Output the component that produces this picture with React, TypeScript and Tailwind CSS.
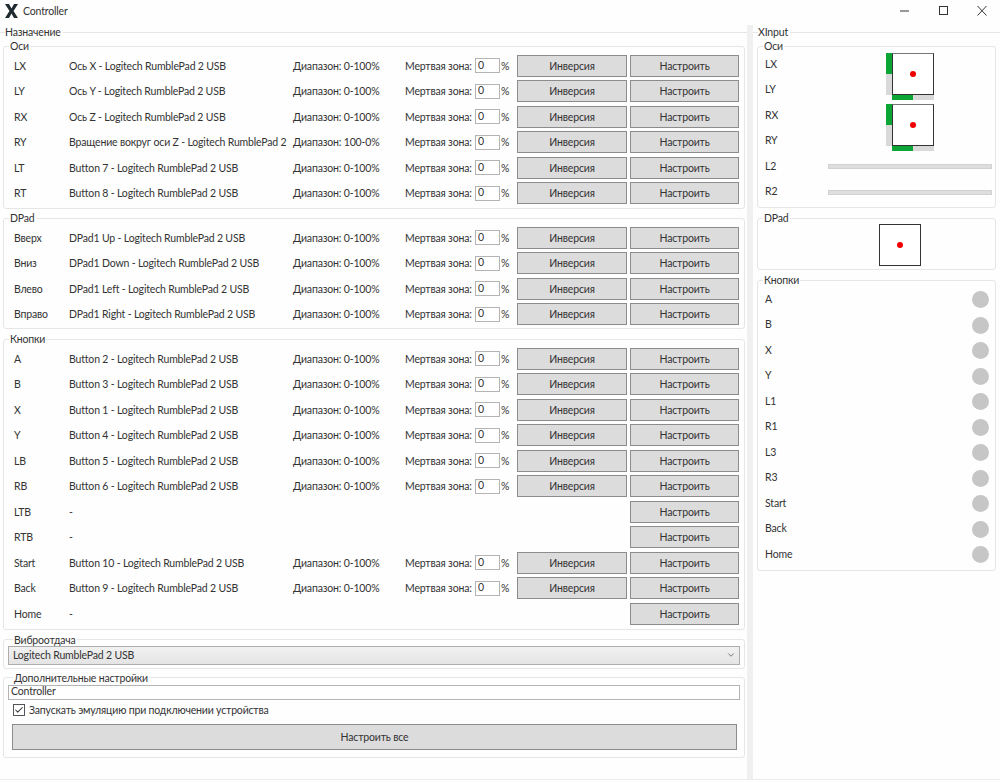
import type { ReactNode } from "react";
import { Check, ChevronDown } from "lucide-react";

type Row = { name: string; source: string; range?: string };

const axes: Row[] = [
  { name: "LX", source: "Ось X - Logitech RumblePad 2 USB", range: "0-100%" },
  { name: "LY", source: "Ось Y - Logitech RumblePad 2 USB", range: "0-100%" },
  { name: "RX", source: "Ось Z - Logitech RumblePad 2 USB", range: "0-100%" },
  { name: "RY", source: "Вращение вокруг оси Z - Logitech RumblePad 2", range: "100-0%" },
  { name: "LT", source: "Button 7 - Logitech RumblePad 2 USB", range: "0-100%" },
  { name: "RT", source: "Button 8 - Logitech RumblePad 2 USB", range: "0-100%" },
];

const dpad: Row[] = [
  { name: "Вверх", source: "DPad1 Up - Logitech RumblePad 2 USB", range: "0-100%" },
  { name: "Вниз", source: "DPad1 Down - Logitech RumblePad 2 USB", range: "0-100%" },
  { name: "Влево", source: "DPad1 Left - Logitech RumblePad 2 USB", range: "0-100%" },
  { name: "Вправо", source: "DPad1 Right - Logitech RumblePad 2 USB", range: "0-100%" },
];

const buttons: Row[] = [
  { name: "A", source: "Button 2 - Logitech RumblePad 2 USB", range: "0-100%" },
  { name: "B", source: "Button 3 - Logitech RumblePad 2 USB", range: "0-100%" },
  { name: "X", source: "Button 1 - Logitech RumblePad 2 USB", range: "0-100%" },
  { name: "Y", source: "Button 4 - Logitech RumblePad 2 USB", range: "0-100%" },
  { name: "LB", source: "Button 5 - Logitech RumblePad 2 USB", range: "0-100%" },
  { name: "RB", source: "Button 6 - Logitech RumblePad 2 USB", range: "0-100%" },
  { name: "LTB", source: "-" },
  { name: "RTB", source: "-" },
  { name: "Start", source: "Button 10 - Logitech RumblePad 2 USB", range: "0-100%" },
  { name: "Back", source: "Button 9 - Logitech RumblePad 2 USB", range: "0-100%" },
  { name: "Home", source: "-" },
];

const xinputButtons = ["A", "B", "X", "Y", "L1", "R1", "L3", "R3", "Start", "Back", "Home"];

function Group({ title, className, children }: { title: string; className?: string; children: ReactNode }) {
  return (
    <fieldset className={`border border-[#e6e6e6] rounded-[3px] ${className || ""}`}>
      <legend className="ml-[5px] px-[1px] h-[14px] leading-[14px]">{title}</legend>
      {children}
    </fieldset>
  );
}

function GreyButton({ label, className }: { label: string; className: string }) {
  return (
    <button className={`bg-[#dcdcdc] border border-[#8c8c8c] text-center pt-[2px] ${className}`}>{label}</button>
  );
}

function MappingRow({ row }: { row: Row }) {
  return (
    <div className="flex items-center h-[25.5px] pl-[10px]">
      <span className="w-[55px] shrink-0 pt-[2px]">{row.name}</span>
      <span className="w-[224px] shrink-0 pt-[2px] whitespace-nowrap">{row.source}</span>
      {row.range && (
        <>
          <span className="w-[112px] shrink-0 pt-[2px] whitespace-nowrap">Диапазон: {row.range}</span>
          <span className="w-[70px] shrink-0 pt-[2px] whitespace-nowrap">Мертвая зона:</span>
          <input
            readOnly
            value="0"
            className="w-[25px] h-[15px] shrink-0 border border-[#b4b4b4] bg-white pl-[2px] outline-none"
          />
          <span className="ml-[1px] w-[9px] shrink-0 pt-[2px]">%</span>
          <GreyButton label="Инверсия" className="ml-[7px] w-[110px] h-[22px] shrink-0" />
        </>
      )}
      <GreyButton label="Настроить" className="ml-auto mr-[5px] w-[109px] h-[22px] shrink-0" />
    </div>
  );
}

function Dot() {
  return <span className="w-[6px] h-[6px] rounded-full bg-[#f00000]" />;
}

// stick preview: vertical bar on the left, square with the dot, horizontal bar below
function StickPlot() {
  return (
    <div className="grid grid-cols-[6px_42px] grid-rows-[42px_5px] w-[48px]">
      <div className="bg-[#d9d9d9] flex flex-col">
        <div className="h-[21px] bg-[#0ca637]" />
      </div>
      <div className="border-[1.5px] border-[#333] border-t-[#777] flex items-center justify-center bg-white">
        <Dot />
      </div>
      <div />
      <div className="bg-[#d9d9d9]">
        <div className="w-[21px] h-full bg-[#0ca637]" />
      </div>
    </div>
  );
}

function WindowButtons() {
  return (
    <div className="flex items-center">
      <svg width="39" height="12" viewBox="0 0 39 12" className="shrink-0">
        <path d="M0 6h9" stroke="#333" strokeWidth="1" />
      </svg>
      <svg width="38" height="12" viewBox="0 0 38 12" className="shrink-0">
        <rect x="0.5" y="1.5" width="8" height="8" fill="none" stroke="#333" strokeWidth="1" />
      </svg>
      <svg width="14" height="12" viewBox="0 0 14 12" className="shrink-0">
        <path d="M0.5 1l9 9.500M9.500 1l-9 9.500" stroke="#333" strokeWidth="1" fill="none" />
      </svg>
    </div>
  );
}

export default function App() {
  return (
    <div className="w-[1000px] h-[782px] overflow-hidden bg-[#fefefe] text-[#333] text-[10.5px] tracking-[-0.17px] font-['Lato','Roboto',sans-serif]">
      {/* title bar */}
      <div className="flex items-center justify-between h-[22px] pl-[5px] pr-[9px]">
        <div className="flex items-center gap-[5px]">
          <svg width="13" height="14" viewBox="0 0 13 14">
            <path d="M0 0h4l2.500 4.500L9 0h4L8.500 7l4.500 7H9L6.500 9.500 4 14H0l4.500-7z" fill="#1f2a30" />
          </svg>
          <span className="pt-[2px]">Controller</span>
        </div>
        <WindowButtons />
      </div>

      <div className="flex h-[758px] border-b border-[#ececec] pt-[3px]">
        {/* left side */}
        <div className="w-[747px] shrink-0">
          <fieldset className="border-t border-[#e6e6e6]">
            <legend className="ml-[5px] h-[14px] leading-[14px] pr-[2px]">Назначение</legend>
            <div className="flex flex-col gap-[3px] ml-[3px] mr-[2px]">
              <Group title="Оси" className="pb-[2px]">
                {axes.map((r) => <MappingRow key={r.name} row={r} />)}
              </Group>
              <Group title="DPad" className="pb-[1px] -mt-px">
                {dpad.map((r) => <MappingRow key={r.name} row={r} />)}
              </Group>
              <Group title="Кнопки" className="pb-[2px]">
                {buttons.map((r) => <MappingRow key={r.name} row={r} />)}
              </Group>
              <Group title="Виброотдача" className="pb-[3px] px-[4px]">
                <div className="flex items-center justify-between h-[19px] -mt-px pl-[4px] pr-[3px] border border-[#adadad] bg-gradient-to-b from-[#f1f1f1] to-[#e4e4e4]">
                  <span className="pt-[2px]">Logitech RumblePad 2 USB</span>
                  <ChevronDown size={10} strokeWidth={1.5} />
                </div>
              </Group>
              <Group title="Дополнительные настройки" className="px-[4px] pb-[7px] -mt-px">
                <input
                  readOnly
                  value="Controller"
                  className="block w-full h-[15px] border border-[#b4b4b4] bg-white pl-[2px] outline-none"
                />
                <label className="flex items-center gap-[4px] h-[21px] pl-[5px] mb-[3px]">
                  <span className="flex items-center justify-center w-[12px] h-[12px] border border-[#555] bg-white">
                    <Check size={10} strokeWidth={2.5} />
                  </span>
                  <span className="pt-[2px]">Запускать эмуляцию при подключении устройства</span>
                </label>
                <GreyButton label="Настроить все" className="block ml-[4px] w-[725px] h-[26px]" />
              </Group>
            </div>
          </fieldset>
        </div>

        <div className="w-[6px] shrink-0 bg-[#f0f0f0]" />

        {/* right side */}
        <div className="flex-1">
          <fieldset className="border-t border-[#e6e6e6]">
            <legend className="ml-[5px] h-[14px] leading-[14px] pr-[2px]">XInput</legend>
            <div className="flex flex-col gap-[3px] ml-[4px] mr-[4px]">
              <Group title="Оси" className="pb-[2px]">
                <div className="grid grid-cols-[63px_164px] auto-rows-[25.5px] items-center pl-[7px] -mt-px">
                  <span>LX</span>
                  <div className="row-span-2 self-start pl-[58px] pt-px"><StickPlot /></div>
                  <span>LY</span>
                  <span>RX</span>
                  <div className="row-span-2 self-start pl-[58px] pt-px"><StickPlot /></div>
                  <span>RY</span>
                  <span>L2</span>
                  <div className="h-[5px] bg-[#dedede] border border-[#d2d2d2]" />
                  <span>R2</span>
                  <div className="h-[5px] bg-[#dedede] border border-[#d2d2d2]" />
                </div>
              </Group>
              <Group title="DPad" className="pb-[3px]">
                <div className="w-[42px] h-[42px] -mt-px ml-[121px] flex items-center justify-center border-[1.5px] border-[#333] bg-white">
                  <Dot />
                </div>
              </Group>
              <Group title="Кнопки" className="pb-[2px]">
                {xinputButtons.map((b) => (
                  <div key={b} className="flex items-center justify-between h-[25.5px] pl-[7px] pr-[6px]">
                    <span>{b}</span>
                    <span className="w-[17px] h-[17px] rounded-full bg-[#c6c6c6]" />
                  </div>
                ))}
              </Group>
            </div>
          </fieldset>
        </div>
      </div>
    </div>
  );
}
